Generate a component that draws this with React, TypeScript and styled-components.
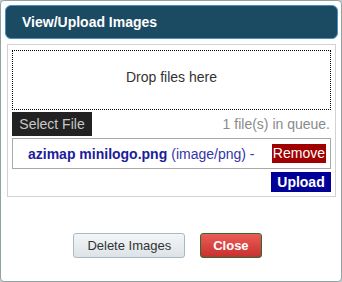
import styled, { createGlobalStyle } from "styled-components";

const GlobalStyle = createGlobalStyle`
html, body {
  margin: 0;
  padding: 0;
  background: #c9cdd0;
  font-family: "Liberation Sans", Arial, sans-serif;
}
`;

const Dialog = styled.div`
box-sizing: border-box;
width: 342px;
height: 282px;
background: #ffffff;
border: 1px solid #8fa3a3;
border-radius: 4px;
padding: 4px 3px 0 4px;
display: flex;
flex-direction: column;
`;

const TitleBar = styled.div`
box-sizing: border-box;
height: 34px;
background: #1b4a63;
border: 1px solid #4f8fbd;
border-radius: 6px;
display: flex;
align-items: center;
padding-left: 16px;
color: #ffffff;
font-weight: bold;
font-size: 14px;
`;

const Panel = styled.div`
margin: 5px 2px 0 2px;
border: 1px solid #d2d2d2;
padding: 5px 4px 4px 4px;
display: flex;
flex-direction: column;
`;

const DropZone = styled.div`
box-sizing: border-box;
height: 60px;
padding-bottom: 6px;
border: 1px dotted #000000;
display: flex;
align-items: center;
justify-content: center;
font-size: 14px;
color: #333333;
`;

const QueueRow = styled.div`
margin-top: 2px;
display: flex;
align-items: center;
justify-content: space-between;
`;

const SelectButton = styled.div`
width: 80px;
height: 24px;
background: #222222;
color: #c8c8c8;
font-size: 14px;
display: flex;
align-items: center;
justify-content: center;
`;

const QueueInfo = styled.span`
font-size: 14px;
color: #8a8a8a;
padding-right: 1px;
`;

const FileRow = styled.div`
box-sizing: border-box;
margin-top: 2px;
height: 31px;
border: 1px solid #a8a8a8;
display: flex;
align-items: center;
padding-left: 15px;
padding-right: 4px;
font-size: 14px;
color: #3535a8;
white-space: nowrap;
overflow: hidden;
`;

const FileName = styled.span`
font-weight: bold;
color: #1c1c9c;
margin-right: 4px;
`;

const Remove = styled.span`
margin-left: auto;
background: #a00000;
color: #ffffff;
padding: 1px 1px 2px 1px;
line-height: 16px;
`;

const UploadRow = styled.div`
margin-top: 3px;
display: flex;
justify-content: flex-end;
`;

const Upload = styled.div`
width: 60px;
height: 20px;
background: #000099;
color: #ffffff;
font-weight: bold;
font-size: 14px;
display: flex;
align-items: center;
justify-content: center;
`;

const Footer = styled.div`
margin-top: 36px;
display: flex;
justify-content: center;
gap: 15px;
padding-right: 8px;
`;

const Button = styled.div<{ $danger?: boolean }>`
box-sizing: border-box;
height: 25px;
padding: 0 ${(p) => (p.$danger ? "12px" : "13px")};
border-radius: 3px;
display: flex;
align-items: center;
justify-content: center;
font-size: 13px;
border: 1px solid ${(p) => (p.$danger ? "#2f6b35" : "#a9b9c2")};
background: ${(p) =>
  p.$danger
    ? "linear-gradient(#ea5d57, #c8302e)"
    : "linear-gradient(#f3f6f8, #dce3e7)"};
color: ${(p) => (p.$danger ? "#ffffff" : "#333333")};
font-weight: ${(p) => (p.$danger ? "bold" : "normal")};
`;

export default function App() {
  return (
    <>
      <GlobalStyle />
      <Dialog>
        <TitleBar>View/Upload Images</TitleBar>
        <Panel>
          <DropZone>Drop files here</DropZone>
          <QueueRow>
            <SelectButton>Select File</SelectButton>
            <QueueInfo>1 file(s) in queue.</QueueInfo>
          </QueueRow>
          <FileRow>
            <FileName>azimap minilogo.png</FileName>
            (image/png) -
            <Remove>Remove</Remove>
          </FileRow>
          <UploadRow>
            <Upload>Upload</Upload>
          </UploadRow>
        </Panel>
        <Footer>
          <Button>Delete Images</Button>
          <Button $danger>Close</Button>
        </Footer>
      </Dialog>
    </>
  );
}
